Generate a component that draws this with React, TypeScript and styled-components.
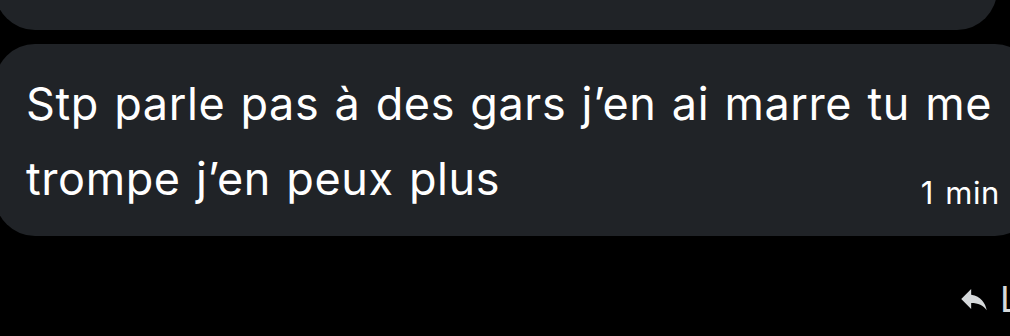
import React from "react";
import styled, { createGlobalStyle } from "styled-components";

const GlobalStyle = createGlobalStyle`
  html, body {
    margin: 0;
    padding: 0;
    background: #000;
    overflow: hidden;
  }
  body {
    font-family: Inter, "Noto Sans", "Liberation Sans", sans-serif;
    color: #e7e9ea;
  }
`;

const Thread = styled.div`
  width: 1010px;
  height: 336px;
  overflow: hidden;
  display: flex;
  flex-direction: column;
  gap: 14px;
`;

const Bubble = styled.div<{ $width: number; $clipTop?: number }>`
  box-sizing: border-box;
  width: ${(p) => p.$width}px;
  margin-left: -5px;
  margin-top: ${(p) => (p.$clipTop ? -p.$clipTop : 0)}px;
  flex-shrink: 0;
  background: #202327;
  border-radius: 40px;
`;

const MessageBody = styled.div`
  display: grid;
  padding: 22px 35px 20px 31px;
  & > * {
    grid-area: 1 / 1;
  }
`;

const MessageText = styled.p`
  margin: 0;
  font-size: 45px;
  line-height: 75px;
  color: #ffffff;
  letter-spacing: 0.6px;
  word-spacing: 2px;
  white-space: nowrap;
`;

const Time = styled.span`
  justify-self: end;
  align-self: end;
  margin-bottom: 8px;
  font-size: 31px;
  line-height: 30px;
  letter-spacing: 0.6px;
  word-spacing: 2px;
  color: #ffffff;
`;

const ReplyRow = styled.div`
  display: flex;
  justify-content: flex-end;
  align-items: center;
  gap: 9px;
  margin-top: 32px;
  margin-right: -20px;
  color: #d6d9db;
`;

const ReplyLabel = styled.span`
  font-size: 36px;
  line-height: 34px;
  width: 30px;
`;

const ReplyIcon = () => (
  <svg width="34" height="34" viewBox="0 0 24 24" fill="currentColor">
    <path d="M10 9V5l-7 7 7 7v-4.1c5 0 8.5 1.6 11 5.1-1-5-4-10-11-11z" />
  </svg>
);

export default function App() {
  return (
    <>
      <GlobalStyle />
      <Thread>
        <Bubble $width={1002} $clipTop={50} style={{ height: 80 }} />
        <Bubble $width={1040}>
          <MessageBody>
            <MessageText>
              Stp parle pas à des gars j’en ai marre tu me
              <br />
              trompe j’en peux plus
            </MessageText>
            <Time>1 min</Time>
          </MessageBody>
        </Bubble>
        <ReplyRow>
          <ReplyIcon />
          <ReplyLabel>L</ReplyLabel>
        </ReplyRow>
      </Thread>
    </>
  );
}
